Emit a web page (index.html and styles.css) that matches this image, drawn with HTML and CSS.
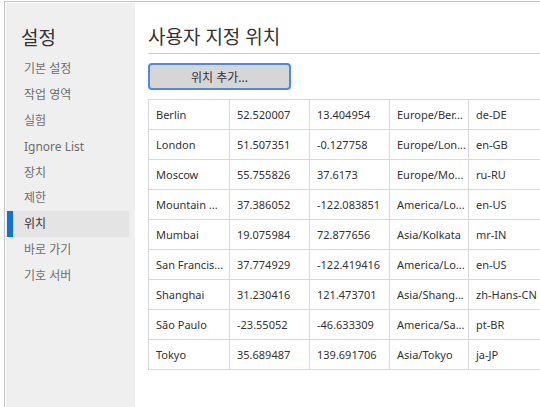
FILE: index.html
```html
<!DOCTYPE html>
<html lang="ko">
<head>
<meta charset="utf-8">
<title>설정</title>
<link rel="stylesheet" href="styles.css">
</head>
<body>
<div class="app">
  <nav class="sidebar">
    <div class="side-title">설정</div>
    <ul class="menu">
      <li class="item">기본 설정</li>
      <li class="item">작업 영역</li>
      <li class="item">실험</li>
      <li class="item">Ignore List</li>
      <li class="item">장치</li>
      <li class="item">제한</li>
      <li class="item selected">위치</li>
      <li class="item">바로 가기</li>
      <li class="item">기호 서버</li>
    </ul>
  </nav>
  <main class="main">
    <h1 class="heading">사용자 지정 위치</h1>
    <button class="add-btn">위치 추가...</button>
    <table class="grid">
      <colgroup>
        <col class="c1"><col class="c2"><col class="c3"><col class="c4"><col class="c5">
      </colgroup>
      <tbody>
        <tr><td>Berlin</td><td>52.520007</td><td>13.404954</td><td>Europe/Ber...</td><td>de-DE</td></tr>
        <tr><td>London</td><td>51.507351</td><td>-0.127758</td><td>Europe/Lon...</td><td>en-GB</td></tr>
        <tr><td>Moscow</td><td>55.755826</td><td>37.6173</td><td>Europe/Mo...</td><td>ru-RU</td></tr>
        <tr><td>Mountain ...</td><td>37.386052</td><td>-122.083851</td><td>America/Lo...</td><td>en-US</td></tr>
        <tr><td>Mumbai</td><td>19.075984</td><td>72.877656</td><td>Asia/Kolkata</td><td>mr-IN</td></tr>
        <tr><td>San Francis...</td><td>37.774929</td><td>-122.419416</td><td>America/Lo...</td><td>en-US</td></tr>
        <tr><td>Shanghai</td><td>31.230416</td><td>121.473701</td><td>Asia/Shang...</td><td>zh-Hans-CN</td></tr>
        <tr><td>São Paulo</td><td>-23.55052</td><td>-46.633309</td><td>America/Sa...</td><td>pt-BR</td></tr>
        <tr><td>Tokyo</td><td>35.689487</td><td>139.691706</td><td>Asia/Tokyo</td><td>ja-JP</td></tr>
      </tbody>
    </table>
  </main>
</div>
</body>
</html>
```
FILE: styles.css
```css
html, body {
  margin: 0;
  padding: 0;
  background: #ffffff;
  overflow: hidden;
}
body {
  font-family: "Noto Sans", "Noto Sans CJK KR", sans-serif;
  color: #333333;
}
.app {
  display: flex;
  margin: 1px 0 0 4px;
  height: 406px;
  border-top: 1px solid #c4c4c4;
  border-left: 1px solid #c4c4c4;
  box-sizing: border-box;
}
.sidebar {
  width: 129px;
  flex: none;
  margin: 1px 0 0 1px;
  background: #efefef;
  padding-top: 22px;
  box-sizing: border-box;
}
.side-title {
  font-size: 19px;
  line-height: 26px;
  color: #333333;
  padding-left: 15px;
  margin-bottom: 5px;
}
.menu {
  list-style: none;
  margin: 0;
  padding: 0;
}
.item {
  height: 25.9px;
  line-height: 25.9px;
  font-size: 12px;
  color: #6e6e6e;
  padding-left: 17px;
  margin: 0 6px 0 1px;
  box-sizing: border-box;
}
.item.selected {
  background: #e4e4e4;
  border-left: 6px solid #0a74d8;
  padding-left: 11px;
  color: #333333;
}
.main {
  flex: 1;
  min-width: 0;
  overflow: hidden;
  padding-left: 13px;
}
.heading {
  margin: 22px 0 0 0;
  font-size: 19px;
  font-weight: normal;
  line-height: 26px;
  padding-bottom: 3px;
  border-bottom: 1px solid #cccccc;
  color: #333333;
  white-space: nowrap;
}
.add-btn {
  display: block;
  margin-top: 9px;
  width: 143px;
  height: 27px;
  background: #d6d6d6;
  border: 2px solid #4a8be8;
  border-radius: 4px;
  font-family: inherit;
  font-size: 12px;
  color: #333333;
  padding: 0;
}
.grid {
  margin-top: 9px;
  border-collapse: collapse;
  table-layout: fixed;
  width: 400px;
  font-size: 11px;
}
.c1 { width: 81px; }
.c2 { width: 80px; }
.c3 { width: 80px; }
.c4 { width: 79px; }
.c5 { width: 80px; }
.grid td {
  height: 30px;
  padding: 0 7px;
  border: 1px solid #d9d9d9;
  white-space: nowrap;
  overflow: hidden;
  box-sizing: border-box;
  color: #333333;
}
```
